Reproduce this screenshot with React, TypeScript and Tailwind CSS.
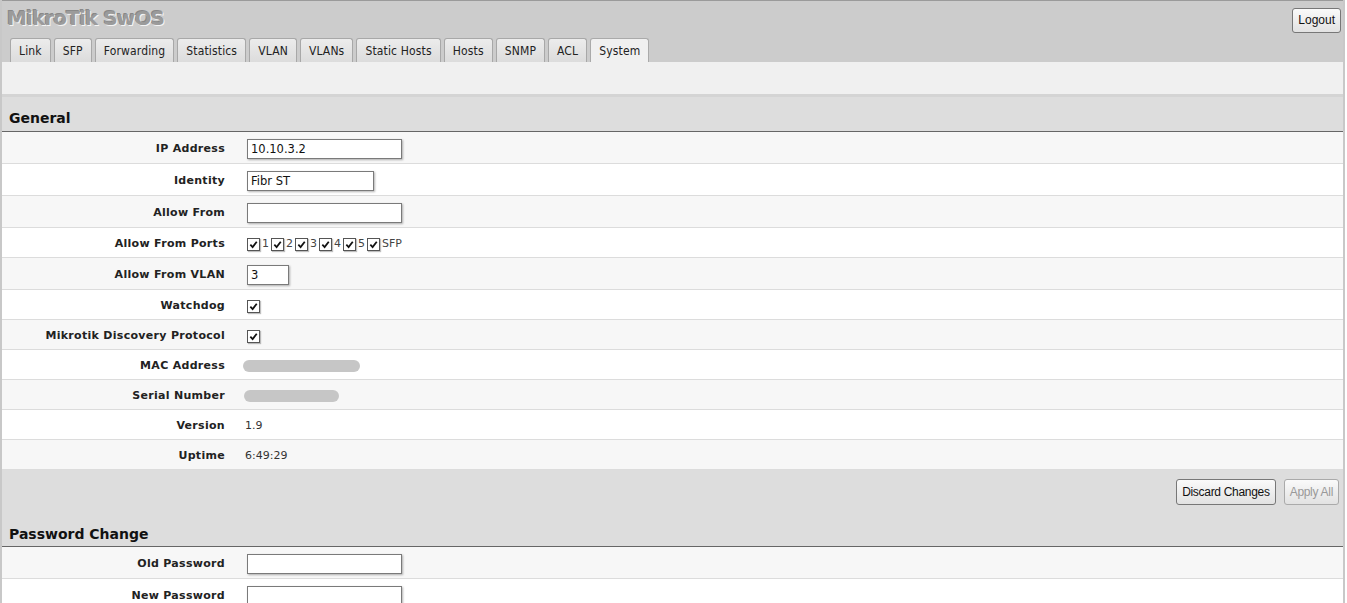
import React from "react";

const tabs = [
	"Link",
	"SFP",
	"Forwarding",
	"Statistics",
	"VLAN",
	"VLANs",
	"Static Hosts",
	"Hosts",
	"SNMP",
	"ACL",
	"System",
];

const Check = () => (
	<span className="inline-flex h-[13px] w-[13px] items-center justify-center border border-[#555] bg-white shadow-[1px_1px_1px_rgba(0,0,0,0.25)]">
		<svg viewBox="0 0 10 10" className="h-[9px] w-[9px]">
			<path d="M1.5 5.2 L4 7.8 L8.6 2" fill="none" stroke="#111" strokeWidth={2} />
		</svg>
	</span>
);

const TextBox = ({ value, w }: { value: string; w: string }) => (
	<div
		className={`${w} h-[20px] border border-[#7a7a7a] bg-white px-[3px] text-[11.5px] leading-[18px] text-[#111] shadow-[1px_1px_2px_rgba(0,0,0,0.3)]`}
	>
		{value}
	</div>
);

const Row = ({
	label,
	light,
	tall,
	children,
}: {
	label: string;
	light: boolean;
	tall?: boolean;
	children?: React.ReactNode;
}) => (
	<div
		className={`flex items-center border-b border-[#dcdcdc] pt-[3px] ${tall ? "h-[32px]" : "h-[30px]"} ${light ? "bg-[#f7f7f7]" : "bg-white"}`}
	>
		<div className="w-[223px] shrink-0 text-right text-[11px] font-bold tracking-[0.3px] text-[#222]">
			{label}
		</div>
		<div className="ml-[22px] flex items-center">{children}</div>
	</div>
);

const Btn = ({ text, disabled }: { text: string; disabled?: boolean }) => (
	<button
		className={`h-[26px] rounded-[3px] border px-[5px] text-[12px] tracking-[-0.3px] font-['Liberation_Sans',sans-serif] bg-gradient-to-b from-[#fafafa] to-[#e2e2e2] ${disabled ? "border-[#aaa] text-[#999]" : "border-[#777] text-[#111]"}`}
	>
		{text}
	</button>
);

export default function App() {
	return (
		<div className="min-h-[603px] bg-white font-['DejaVu_Sans',Verdana,sans-serif]">
			<div className="mr-[2px] border-x-2 border-[#c8c8c8]">
				{/* header */}
				<div className="relative border-t border-[#9a9a9a] bg-[#cccccc] pt-[3px]">
					<div className="pl-[5px] text-[20px] font-bold leading-[28px] tracking-[-0.9px] text-[#9b9b9b] [text-shadow:1px_1px_0_#f4f4f4,-1px_-1px_0_#888]">
						MikroTik SwOS
					</div>
					<div className="absolute right-[2px] top-[6px]">
						<button className="h-[25px] rounded-[3px] border border-[#777] bg-gradient-to-b from-[#fafafa] to-[#e2e2e2] px-[5px] text-[12px] text-[#111] font-['Liberation_Sans',sans-serif]">
							Logout
						</button>
					</div>
					<div className="mt-[6px] flex gap-[3px] pl-[8px]">
						{tabs.map((t) => (
							<div
								key={t}
								className={`flex h-[24px] items-center rounded-t-[3px] border border-b-0 px-[8px] text-[12px] tracking-[0.15px] font-['DejaVu_Sans_Condensed','DejaVu_Sans',sans-serif] text-[#222] ${t === "System" ? "border-[#aaa] bg-[#f0f0f0]" : "border-[#a8a8a8] bg-gradient-to-b from-[#ececec] to-[#dcdcdc]"}`}
							>
								{t}
							</div>
						))}
					</div>
				</div>
				<div className="h-[32px] bg-[#f0f0f0]" />
				<div className="h-[3px] bg-[#d4d4d4]" />

				{/* General */}
				<div className="flex h-[35px] items-end border-b border-[#666] bg-[#dddddd] pb-[2px] pl-[7px] text-[14px] font-bold text-[#111]">
					General
				</div>
				<Row label="IP Address" light tall>
					<TextBox value="10.10.3.2" w="w-[155px]" />
				</Row>
				<Row label="Identity" light={false} tall>
					<TextBox value="Fibr ST" w="w-[127px]" />
				</Row>
				<Row label="Allow From" light tall>
					<TextBox value="" w="w-[155px]" />
				</Row>
				<Row label="Allow From Ports" light={false}>
					<div className="flex items-center gap-[2px] text-[11px] text-[#444]">
						{["1", "2", "3", "4", "5", "SFP"].map((p) => (
							<span key={p} className="flex items-center gap-[2px]">
								<Check />
								<span>{p}</span>
							</span>
						))}
					</div>
				</Row>
				<Row label="Allow From VLAN" light tall>
					<TextBox value="3" w="w-[42px]" />
				</Row>
				<Row label="Watchdog" light={false}>
					<Check />
				</Row>
				<Row label="Mikrotik Discovery Protocol" light>
					<Check />
				</Row>
				<Row label="MAC Address" light={false}>
					<div className="-ml-[4px] h-[12px] w-[117px] rounded-[6px] bg-[#c6c6c6]" />
				</Row>
				<Row label="Serial Number" light>
					<div className="-ml-[3px] h-[12px] w-[95px] rounded-[6px] bg-[#c6c6c6]" />
				</Row>
				<Row label="Version" light={false}>
					<span className="-ml-[2px] text-[11px] text-[#333]">1.9</span>
				</Row>
				<Row label="Uptime" light>
					<span className="-ml-[2px] text-[11px] text-[#333]">6:49:29</span>
				</Row>

				{/* actions + Password Change */}
				<div className="bg-[#dddddd]">
					<div className="flex justify-end gap-[8px] pr-[4px] pt-[9px]">
						<Btn text="Discard Changes" />
						<Btn text="Apply All" disabled />
					</div>
					<div className="flex h-[42px] items-end border-b border-[#666] pb-[1px] pl-[7px] text-[14px] font-bold text-[#111]">
						Password Change
					</div>
				</div>
				<Row label="Old Password" light tall>
					<TextBox value="" w="w-[155px]" />
				</Row>
				<Row label="New Password" light={false} tall>
					<TextBox value="" w="w-[155px]" />
				</Row>
				<Row label="Confirm Password" light tall>
					<TextBox value="" w="w-[155px]" />
				</Row>
			</div>
		</div>
	);
}
